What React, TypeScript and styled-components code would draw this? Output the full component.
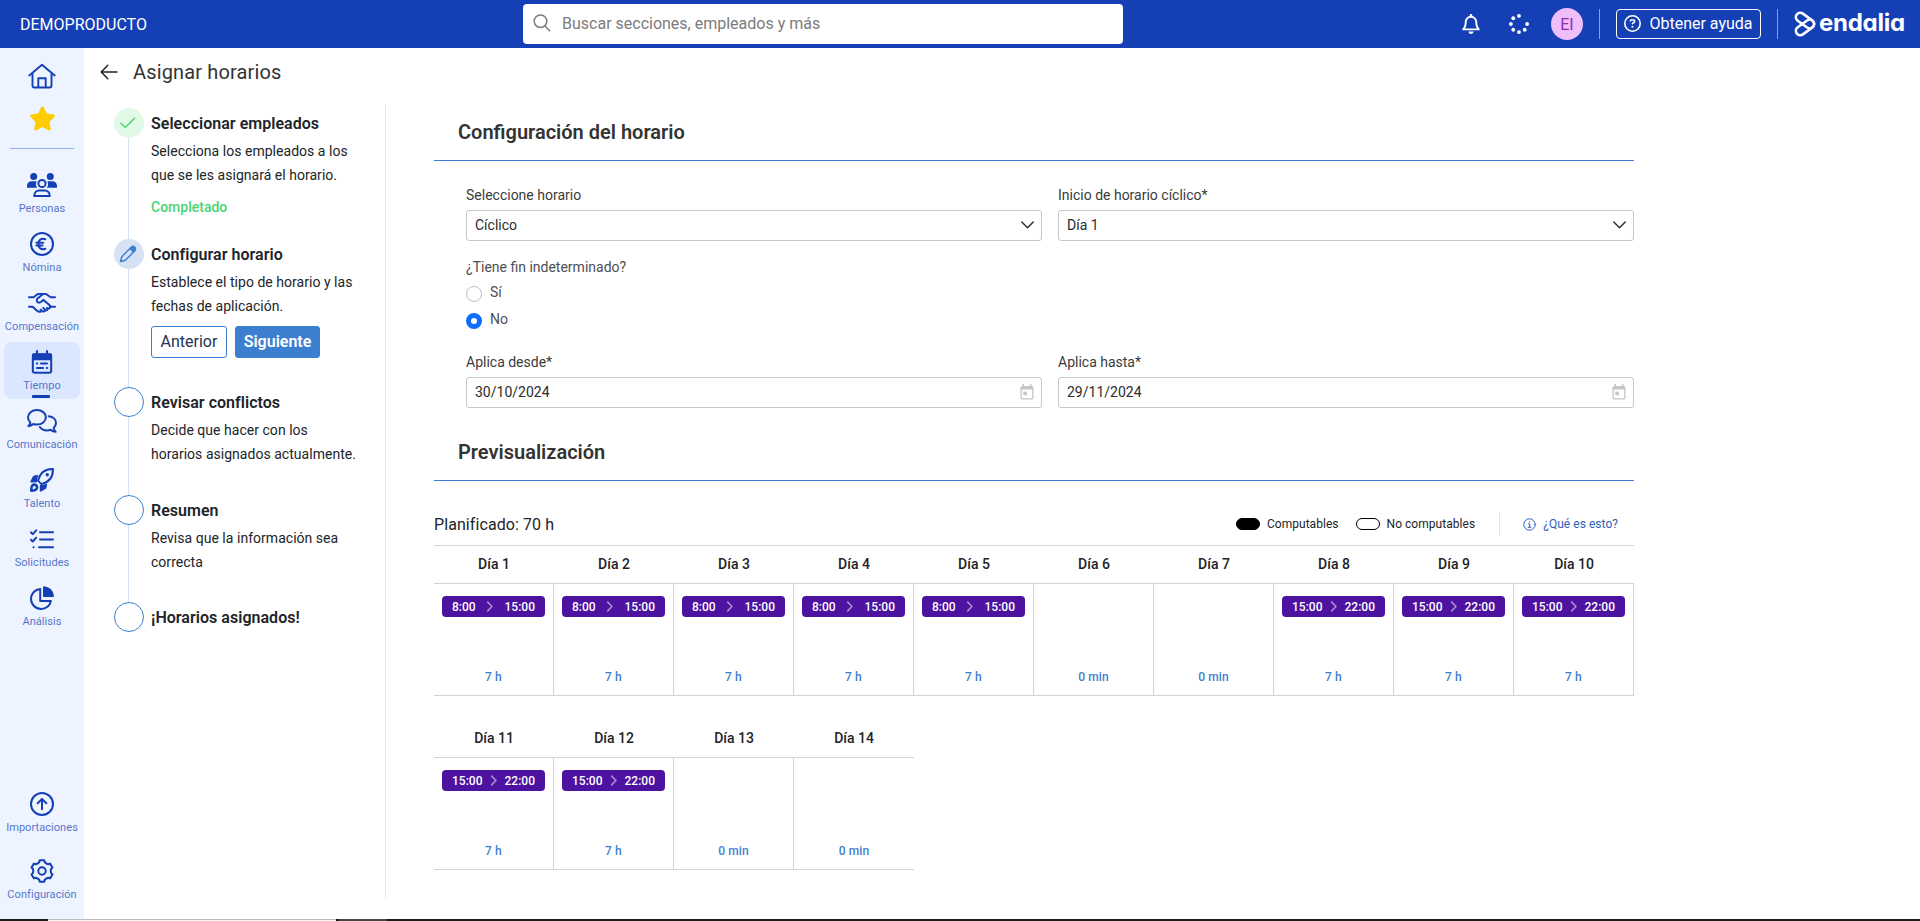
import React from "react";
import styled, { createGlobalStyle } from "styled-components";
import { FaRegBell, FaStar, FaRegCircleQuestion } from "react-icons/fa6";

const NAVY = "#143fb5";
const BLUE = "#3a7fd2";

const GlobalStyle = createGlobalStyle`
  *, *::before, *::after { box-sizing: border-box; }
  body {
    margin: 0;
    background: #fff;
    color: #212429;
    font-family: Roboto, "Liberation Sans", sans-serif;
    overflow: hidden;
  }
  button { font-family: inherit; }
  svg { display: block; flex: none; }
  p, h1, h2, h3 { margin: 0; }
`;

const Page = styled.div`
  display: flex;
  flex-direction: column;
  height: 921px;
`;

/* ---------- top bar ---------- */

const TopBar = styled.header`
  height: 48px;
  flex: none;
  display: grid;
  grid-template-columns: 523px 600px 1fr;
  align-items: center;
  background: #143fb5;
  color: #fff;
`;

const Company = styled.div`
  padding-left: 20px;
  font-size: 16px;
`;

const SearchBox = styled.div`
  height: 40px;
  display: flex;
  align-items: center;
  gap: 11px;
  padding: 0 10px 2px;
  border-radius: 4px;
  background: #fff;
  color: #7c7c7c;
  font-size: 16px;
`;

const Tools = styled.div`
  display: flex;
  align-items: center;
  justify-content: flex-end;
  padding-right: 16px;
`;

const ToolIcon = styled.div<{ $gap: number }>`
  display: flex;
  margin-right: ${(p) => p.$gap}px;
`;

const Avatar = styled.div`
  width: 32px;
  height: 32px;
  margin-right: 16px;
  border-radius: 50%;
  display: grid;
  place-items: center;
  background: #efbcfc;
  color: #8a2fa8;
  font-size: 16px;
`;

const Separator = styled.div`
  width: 1px;
  height: 30px;
  background: #89a2e0;
`;

const HelpButton = styled.button`
  width: 145px;
  height: 30px;
  margin: 0 16px;
  padding: 0 0 1px;
  display: flex;
  align-items: center;
  justify-content: center;
  gap: 8px;
  border: 1px solid #fff;
  border-radius: 4px;
  background: transparent;
  color: #fff;
  font-size: 16px;
`;

const Brand = styled.div`
  display: flex;
  align-items: center;
  width: 126px;
  padding-left: 16px;
  gap: 3px;
`;

const BrandName = styled.span`
  font-family: Inter, sans-serif;
  font-weight: 700;
  font-size: 24px;
  line-height: 28px;
  letter-spacing: -0.25px;
  font-feature-settings: "cv11";
  padding-bottom: 3px;
`;

/* ---------- side bar ---------- */

const Body = styled.div`
  flex: 1;
  min-height: 0;
  display: flex;
`;

const SideBar = styled.nav`
  width: 84px;
  flex: none;
  display: flex;
  flex-direction: column;
  align-items: center;
  background: #edf4ff;
  color: ${NAVY};
`;

const Shortcut = styled.div<{ $top: number }>`
  height: 26px;
  margin-top: ${(p) => p.$top}px;
  display: grid;
  place-items: center;
`;

const SideRule = styled.div`
  width: 64px;
  height: 1px;
  margin: 17px 0 16px;
  background: #8eb4f2;
`;

const NavItem = styled.div<{ $active?: boolean }>`
  width: 76px;
  height: 57px;
  margin-bottom: 2px;
  padding-top: 8px;
  display: flex;
  flex-direction: column;
  align-items: center;
  border-radius: 8px;
  background: ${(p) => (p.$active ? "#dbe7fe" : "transparent")};
`;

const NavIcon = styled.div`
  height: 24px;
  display: grid;
  place-items: center;
`;

const NavLabel = styled.span`
  margin-top: 5px;
  font-size: 11px;
  line-height: 14px;
  letter-spacing: 0.06px;
  color: #5876cb;
  white-space: nowrap;
`;

const ActiveBar = styled.div`
  width: 18px;
  height: 3px;
  margin: 2px 2px 0 0;
  border-radius: 1px;
  background: ${NAVY};
`;

const NavBottom = styled.div`
  margin-top: auto;
  display: flex;
  flex-direction: column;
  gap: 8px;
  padding-bottom: 9px;
`;

/* ---------- wizard steps ---------- */

const Content = styled.main`
  flex: 1;
  display: flex;
  flex-direction: column;
`;

const TitleRow = styled.div`
  height: 56px;
  flex: none;
  display: flex;
  align-items: center;
  gap: 15px;
  padding: 0 0 8px 16px;
`;

const PageTitle = styled.h1`
  font-size: 20px;
  font-weight: 400;
  letter-spacing: 0.14px;
  color: #333;
`;

const Columns = styled.div`
  flex: 1;
  display: flex;
`;

const Steps = styled.aside`
  width: 302px;
  height: 795px;
  padding: 4px 20px 0 30px;
  border-right: 1px solid #e7e8ec;
`;

const Step = styled.section<{ $height: number }>`
  height: ${(p) => p.$height}px;
  display: flex;
  gap: 7px;
`;

const StepTrack = styled.div`
  width: 30px;
  flex: none;
  display: flex;
  flex-direction: column;
`;

const StepDot = styled.div<{ $kind: "done" | "current" | "todo" }>`
  width: 30px;
  height: 30px;
  flex: none;
  display: grid;
  place-items: center;
  padding: 0 2px 1px 0;
  border-radius: 50%;
  border: ${(p) => (p.$kind === "todo" ? `1px solid ${BLUE}` : "0")};
  background: ${(p) => ({ done: "#e2f9e8", current: "#d6e1f4", todo: "#fff" })[p.$kind]};
`;

const StepLine = styled.div`
  flex: 1;
  width: 1px;
  margin-left: 14px;
  background: #d3dff3;
`;

const StepText = styled.div`
  white-space: nowrap;
`;

const StepTitle = styled.h2`
  font-size: 16px;
  font-weight: 600;
  line-height: 24px;
  padding-top: 4px;
  letter-spacing: 0.03px;
`;

const StepInfo = styled.p`
  margin-top: 4px;
  font-size: 14px;
  line-height: 23.6px;
  letter-spacing: 0.03px;
`;

const StepState = styled.p`
  margin-top: 9px;
  font-size: 14px;
  font-weight: 500;
  line-height: 22px;
  color: #4dd471;
`;

const StepActions = styled.div`
  display: flex;
  gap: 8px;
  margin-top: 8px;
`;

const StepButton = styled.button<{ $primary?: boolean }>`
  width: ${(p) => (p.$primary ? 85 : 76)}px;
  height: 32px;
  padding: 0 0 1px;
  border: 1px solid ${BLUE};
  border-radius: 3px;
  background: ${(p) => (p.$primary ? "#3c7ed0" : "#fff")};
  color: ${(p) => (p.$primary ? "#fff" : "#1f3354")};
  font-size: 16px;
  font-weight: ${(p) => (p.$primary ? 600 : 400)};
`;

/* ---------- form ---------- */

const Panel = styled.div`
  width: 1200px;
  margin-left: 48px;
`;

const SectionTitle = styled.h2`
  height: 57px;
  padding: 16px 24px 0;
  border-bottom: 1px solid ${BLUE};
  color: #333;
  font-size: 20px;
  font-weight: 600;
  line-height: 24px;
`;

const FieldGrid = styled.div`
  display: grid;
  grid-template-columns: 1fr 1fr;
  column-gap: 16px;
  padding-left: 32px;
`;

const Field = styled.label`
  display: flex;
  flex-direction: column;
  gap: 5px;
  font-size: 14px;
  line-height: 20px;
  color: #3b3b3b;
`;

const Control = styled.div`
  height: 31px;
  display: flex;
  align-items: center;
  justify-content: space-between;
  padding: 0 7px 1px 8px;
  border: 1px solid #c8c8c8;
  border-radius: 3px;
  color: #2b2b2b;
`;

const RadioGroup = styled.div`
  padding: 16px 0 0 32px;
  height: 111px;
  font-size: 14px;
  line-height: 20px;
  color: #4c4f54;
`;

const RadioRow = styled.div`
  height: 27px;
  display: flex;
  align-items: flex-start;
  gap: 8px;
  padding-top: 5px;
`;

const RadioDot = styled.span<{ $on?: boolean }>`
  width: 16px;
  height: 16px;
  margin-top: 4px;
  border-radius: 50%;
  border: ${(p) => (p.$on ? "5px solid #0d6efd" : "1px solid #bfbfbf")};
  background: #fff;
`;

/* ---------- preview ---------- */

const PreviewBar = styled.div`
  height: 64px;
  padding-top: 22px;
  display: flex;
  align-items: center;
  font-size: 16px;
  letter-spacing: 0.08px;
`;

const Legend = styled.div`
  margin-left: auto;
  padding-right: 16px;
  display: flex;
  align-items: center;
  font-size: 12px;
  letter-spacing: 0.04px;
`;

const Swatch = styled.span<{ $filled?: boolean }>`
  width: 24px;
  height: 12px;
  margin: 0 7px 0 17px;
  border: 1px solid #000;
  border-radius: 6px;
  background: ${(p) => (p.$filled ? "#000" : "#fff")};
`;

const LegendHelp = styled.div`
  height: 24px;
  margin-left: 24px;
  padding-left: 23px;
  display: flex;
  align-items: center;
  gap: 7px;
  border-left: 1px solid #e6e6e6;
  color: #2c62b8;
`;

const Week = styled.div<{ $first?: boolean }>`
  display: flex;
  width: fit-content;
  margin-top: ${(p) => (p.$first ? 0 : 23)}px;
  border-top: ${(p) => (p.$first ? "1px solid #d4d4d4" : "0")};
  border-bottom: 1px solid #d4d4d4;
`;

const Day = styled.div`
  width: 120px;
`;

const DayName = styled.div<{ $first?: boolean }>`
  height: ${(p) => (p.$first ? 37 : 38)}px;
  padding-bottom: 1px;
  display: grid;
  place-items: center;
  font-size: 14px;
  font-weight: 500;
`;

const DayCell = styled.div<{ $edge: boolean }>`
  height: 112px;
  padding: 12px 8px 10px;
  display: flex;
  flex-direction: column;
  align-items: center;
  justify-content: space-between;
  border-top: 1px solid #d4d4d4;
  border-right: ${(p) => (p.$edge ? "1px solid #d4d4d4" : "0")};
`;

const Shift = styled.div`
  width: 103px;
  height: 21px;
  padding: 0 10px;
  display: flex;
  align-items: center;
  justify-content: space-between;
  border-radius: 4px;
  background: #4d12a0;
  color: #fff;
  font-size: 12px;
  font-weight: 500;
`;

const Total = styled.span`
  margin-top: auto;
  font-size: 12px;
  font-weight: 500;
  line-height: 16px;
  letter-spacing: 0.1px;
  color: #3f7fcf;
`;

/* ---------- taskbar edge ---------- */

const Edge = styled.footer`
  height: 2px;
  flex: none;
  display: grid;
  grid-template-columns: 48px 288px 3px 48px 1fr;
  background: #1b1b1b;
`;

const EdgeField = styled.div`
  grid-column: 2;
  border-top: 1px solid #bdbdbd;
  background: #f3f3f3;
`;

const EdgeButton = styled.div`
  grid-column: 4;
  background: #484848;
`;

/* ---------- icons ---------- */

type DrawProps = { w: number; h: number; sw?: number; children: React.ReactNode };

const Draw = ({ w, h, sw = 2, children }: DrawProps) => (
  <svg
    width={w}
    height={h}
    viewBox={`0 0 ${w} ${h}`}
    fill="none"
    stroke="currentColor"
    strokeWidth={sw}
    strokeLinecap="round"
    strokeLinejoin="round"
  >
    {children}
  </svg>
);

const HomeIcon = () => (
  <Draw w={28} h={26} sw={1.9}>
    <path d="M1.300 12.500 14 1.800 26.700 12.500" />
    <path d="M4.500 11v11.500a2 2 0 0 0 2 2h15a2 2 0 0 0 2-2V11" />
    <path d="M10.300 24v-8.800h7.400V24" />
  </Draw>
);

const PeopleIcon = () => (
  <Draw w={30} h={24}>
    <g fill="currentColor" stroke="none">
      <circle cx="6.7" cy="3.5" r="3.5" />
      <circle cx="23.3" cy="3.5" r="3.5" />
      <path d="M0 14.8V13c0-2.8 2-4.8 4.8-4.8H8.6l1.1.4c-1.3 2.2-1 4.6.5 6.2zM30 14.800V13c0-2.800-2-4.800-4.800-4.800h-3.800l-1.100.4c1.300 2.200 1 4.600-.5 6.200z" />
    </g>
    <circle cx="15" cy="10.5" r="3.6" />
    <path d="M7.2 23c0-3.400 2.300-5.500 5-5.500h5.600c2.700 0 5 2.100 5 5.500z" />
  </Draw>
);

const EuroIcon = () => (
  <Draw w={24} h={24}>
    <circle cx="12" cy="12" r="11" />
    <path d="M15.300 7.200c-4.200-1.500-7 .9-7 4.800s2.800 6.300 7 4.800M6.400 10.700h6.800M6.400 13.500h6.200" />
  </Draw>
);

const HandshakeIcon = () => (
  <Draw w={28} h={20}>
    <path d="M1 4.200h4.600L8.800 1.700c1.600-1.100 4-1.100 5.600-.2M27 4.200h-4.300l-3.900-2.700c-1.500-.9-3.300-.8-4.700.2L9.600 5.600c-1.200 1-1 2.700 0 3.500 1 .7 2.200.6 3.200-.1l2.700-2.100 5.900 5.100c1.100 1 1 2.400.1 3.100-.8.6-1.900.4-2.500-.1" />
    <path d="M1 13.700h3.700l4 3.700c1.800 1.500 3.600 1.700 5.300.8 1.200.7 2.700.3 3.200-.9 1.200.3 2.300-.4 2.600-1.500M27 13.700h-4.800M14 18l-1.300-1.200M17 16.800l-1.800-1.900" />
  </Draw>
);

const CalendarIcon = () => (
  <Draw w={22} h={24}>
    <path d="M6 1v3M16 1v3" />
    <rect x="1.800" y="4.200" width="18.400" height="18.600" rx="2" />
    <path d="M2 4.500h18v4.700H2z" fill="currentColor" />
    <path d="M10 13.600h6M6 18h6M5.800 13.600h.4M15.800 18h.4" />
  </Draw>
);

const ChatIcon = () => (
  <Draw w={30} h={24}>
    <path d="M1.400 17.100c1-.9 1.700-2 2-3.400C1.900 12.200 1 10.300 1 8.300 1 4.300 4.900 1 9.900 1s9 3.300 9 7.300-4 7.300-9 7.300c-1.300 0-2.500-.2-3.600-.6-1.300 1.200-3 2-4.900 2.100z" />
    <path d="M21.800 7.200c4.200.5 7.200 3.300 7.200 6.900 0 2-.9 3.700-2.300 5 .3 1.400 1 2.600 2 3.700-2.100 0-3.800-.8-5.100-2-1 .4-2.200.6-3.500.6-3.100 0-5.700-1.300-7.200-3.300" />
  </Draw>
);

const RocketIcon = () => (
  <Draw w={24} h={24}>
    <path d="M8 12.600C10 5.500 14.500.8 22.900 1.100c.4 8.500-4.300 13-11.400 15z" />
    <circle cx="17.300" cy="6.700" r="1.700" fill="currentColor" stroke="none" />
    <g fill="currentColor" stroke="none">
      <path d="M8.400 6.900 5.300 7.200C4 7.400 3 8.200 2.400 9.300L.5 13.200c-.3.700.1 1.300.9 1.300l5.600-.3c0-2.700.4-4.900 1.400-7.300zM17.100 15.600l-.3 3.200c-.2 1.200-1 2.200-2.100 2.800l-3.600 2c-.7.300-1.300-.1-1.300-.9v-5.600c2.700 0 4.900-.5 7.300-1.500z" />
    </g>
    <path
      d="M1.400 22.700c-.2-2.700.1-4.400 1-5.300 1.100-1.100 2.900-1.100 3.900 0 1 1 1 2.800-.1 3.900-.8.9-2.500 1.300-4.800 1.400z"
      strokeWidth="2.600"
    />
  </Draw>
);

const TasksIcon = () => (
  <Draw w={24} h={20}>
    <path d="M1 3.400l1.800 1.700L6.200 1.300M1 10.800l1.800 1.700 3.400-3.800M10 3.300h13M10 10.600h13M9 18.200h14M3.400 18.200h.2" />
  </Draw>
);

const PieIcon = () => (
  <Draw w={24} h={24}>
    <path d="M10.200 3C4.800 3.500 1 7.900 1 12.800 1 18.500 5.500 23 11.200 23c4.700 0 8.900-3.200 9.700-8.100H10.200z" />
    <path d="M14 1.200c5 .3 8.600 4.200 9 8.800h-9z" fill="currentColor" />
  </Draw>
);

const UploadIcon = () => (
  <Draw w={24} h={24}>
    <circle cx="12" cy="12" r="11" />
    <path d="M12 17.200V7M7.700 11.200 12 6.900l4.300 4.300" />
  </Draw>
);

const GearIcon = () => {
  const teeth = [0, 1, 2, 3, 4, 5].flatMap((i) =>
    [
      [-30, 8.7],
      [-17, 9.3],
      [-12, 11],
      [12, 11],
      [17, 9.3],
    ].map(([offset, radius]) => {
      const angle = ((i * 60 + offset) * Math.PI) / 180;
      return `${(12 + radius * Math.sin(angle)).toFixed(2)},${(12 - radius * Math.cos(angle)).toFixed(2)}`;
    }),
  );
  return (
    <Draw w={24} h={24}>
      <polygon points={teeth.join(" ")} />
      <circle cx="12" cy="12" r="3.7" />
    </Draw>
  );
};

const SpinnerIcon = () => (
  <svg width="20" height="20" viewBox="0 0 20 20" fill="#fff">
    {[0, 90, 135, 180, 225, 270, 315].map((deg) => (
      <circle
        key={deg}
        cx={10 + 8.1 * Math.sin((deg * Math.PI) / 180)}
        cy={10 - 8.1 * Math.cos((deg * Math.PI) / 180)}
        r="1.9"
      />
    ))}
  </svg>
);

const BrandMark = () => (
  <Draw w={22} h={26} sw={2.6}>
    <rect x="-10.2" y="-4.4" width="20.4" height="8.8" rx="4.4" transform="translate(11 9.600) rotate(36)" />
    <rect x="-10.2" y="-4.4" width="20.4" height="8.8" rx="4.4" transform="translate(11 16.400) rotate(-36)" />
  </Draw>
);

const SearchIcon = () => (
  <Draw w={18} h={18} sw={1.5}>
    <circle cx="7.500" cy="7.200" r="6.300" />
    <path d="M12 12l4.700 4.700" />
  </Draw>
);

const BackIcon = () => (
  <Draw w={18} h={16} sw={1.5}>
    <path d="M17 8H1.200M7.800 1.300 1.200 8l6.600 6.700" />
  </Draw>
);

const CheckIcon = () => (
  <Draw w={16} h={12} sw={1.5}>
    <path d="M1 6.300 5.300 10.500 14.500 1.200" stroke="#4dd471" />
  </Draw>
);

const PencilIcon = () => (
  <Draw w={18} h={18} sw={1.4}>
    <g stroke={BLUE}>
      <path d="M1.500 16.500l1.300-4.800L12.200 2.200a2.200 2.200 0 0 1 3.200 0l.4.4a2.200 2.200 0 0 1 0 3.200L6.400 15.200z" />
      <path d="M11 3.500l2-1.800c1-.6 2-.4 2.700.5s.9 2 .1 3l-1.500 1.900z" fill={BLUE} />
    </g>
  </Draw>
);

const DownIcon = () => (
  <Draw w={13} h={8} sw={1.4}>
    <path d="M.8 1l5.700 5.800L12.200 1" />
  </Draw>
);

const DateIcon = () => (
  <svg width="14" height="16" viewBox="0 0 14 16" fill="#c6c6c6">
    <path d="M2.500 0h1.500v2h6V0h1.500v2H12a1.500 1.500 0 0 1 1.500 1.500V14a1.500 1.500 0 0 1-1.500 1.500H2A1.500 1.500 0 0 1 .5 14V3.500A1.500 1.500 0 0 1 2 2h.5zM1.800 5.500v8.700h10.400V5.500z" fillRule="evenodd" />
    <path d="M3.300 7.700h3.600v3.600H3.300z" />
  </svg>
);

const ToIcon = () => (
  <Draw w={8} h={11} sw={1.7}>
    <path d="M1.700 1.200l4.200 4.300-4.200 4.300" stroke="#a78bd0" />
  </Draw>
);

const InfoIcon = () => (
  <Draw w={13} h={13} sw={1}>
    <circle cx="6.5" cy="6.5" r="5.700" />
    <path d="M5.500 5.800h1.200v3.400M5.200 9.300h2.800M6.500 3.600v.3" />
  </Draw>
);

/* ---------- data ---------- */

const navItems = [
  { label: "Personas", icon: <PeopleIcon /> },
  { label: "Nómina", icon: <EuroIcon /> },
  { label: "Compensación", icon: <HandshakeIcon /> },
  { label: "Tiempo", icon: <CalendarIcon />, active: true },
  { label: "Comunicación", icon: <ChatIcon /> },
  { label: "Talento", icon: <RocketIcon /> },
  { label: "Solicitudes", icon: <TasksIcon /> },
  { label: "Análisis", icon: <PieIcon /> },
];

type DayPlan = { day: number; from?: string; to?: string };

const morning = (day: number): DayPlan => ({ day, from: "8:00", to: "15:00" });
const evening = (day: number): DayPlan => ({ day, from: "15:00", to: "22:00" });

const rows: DayPlan[][] = [
  [...[1, 2, 3, 4, 5].map(morning), { day: 6 }, { day: 7 }, ...[8, 9, 10].map(evening)],
  [evening(11), evening(12), { day: 13 }, { day: 14 }],
];

const FirstFields = styled(FieldGrid)`
  padding-top: 24px;
`;

const PreviewTitle = styled(SectionTitle)`
  margin-top: 16px;
`;

const SelectField = ({ label, value }: { label: string; value: string }) => (
  <Field>
    {label}
    <Control>
      {value}
      <DownIcon />
    </Control>
  </Field>
);

const DateField = ({ label, value }: { label: string; value: string }) => (
  <Field>
    {label}
    <Control>
      {value}
      <DateIcon />
    </Control>
  </Field>
);

export default function App() {
  return (
    <Page>
      <GlobalStyle />
      <TopBar>
        <Company>DEMOPRODUCTO</Company>
        <SearchBox>
          <SearchIcon />
          Buscar secciones, empleados y más
        </SearchBox>
        <Tools>
          <ToolIcon $gap={28}>
            <FaRegBell size={20} />
          </ToolIcon>
          <ToolIcon $gap={22}>
            <SpinnerIcon />
          </ToolIcon>
          <Avatar>EI</Avatar>
          <Separator />
          <HelpButton>
            <FaRegCircleQuestion size={17} />
            Obtener ayuda
          </HelpButton>
          <Separator />
          <Brand>
            <BrandMark />
            <BrandName>endalia</BrandName>
          </Brand>
        </Tools>
      </TopBar>

      <Body>
        <SideBar>
          <Shortcut $top={15}>
            <HomeIcon />
          </Shortcut>
          <Shortcut $top={16}>
            <FaStar size={27} color="#ffcc00" />
          </Shortcut>
          <SideRule />
          {navItems.map((item) => (
            <NavItem key={item.label} $active={item.active}>
              <NavIcon>{item.icon}</NavIcon>
              <NavLabel>{item.label}</NavLabel>
              {item.active && <ActiveBar />}
            </NavItem>
          ))}
          <NavBottom>
            <NavItem>
              <NavIcon>
                <UploadIcon />
              </NavIcon>
              <NavLabel>Importaciones</NavLabel>
            </NavItem>
            <NavItem>
              <NavIcon>
                <GearIcon />
              </NavIcon>
              <NavLabel>Configuración</NavLabel>
            </NavItem>
          </NavBottom>
        </SideBar>

        <Content>
          <TitleRow>
            <BackIcon />
            <PageTitle>Asignar horarios</PageTitle>
          </TitleRow>
          <Columns>
            <Steps>
              <Step $height={131}>
                <StepTrack>
                  <StepDot $kind="done">
                    <CheckIcon />
                  </StepDot>
                  <StepLine />
                </StepTrack>
                <StepText>
                  <StepTitle>Seleccionar empleados</StepTitle>
                  <StepInfo>
                    Selecciona los empleados a los
                    <br />
                    que se les asignará el horario.
                  </StepInfo>
                  <StepState>Completado</StepState>
                </StepText>
              </Step>
              <Step $height={148}>
                <StepTrack>
                  <StepDot $kind="current">
                    <PencilIcon />
                  </StepDot>
                  <StepLine />
                </StepTrack>
                <StepText>
                  <StepTitle>Configurar horario</StepTitle>
                  <StepInfo>
                    Establece el tipo de horario y las
                    <br />
                    fechas de aplicación.
                  </StepInfo>
                  <StepActions>
                    <StepButton>Anterior</StepButton>
                    <StepButton $primary>Siguiente</StepButton>
                  </StepActions>
                </StepText>
              </Step>
              <Step $height={108}>
                <StepTrack>
                  <StepDot $kind="todo" />
                  <StepLine />
                </StepTrack>
                <StepText>
                  <StepTitle>Revisar conflictos</StepTitle>
                  <StepInfo>
                    Decide que hacer con los
                    <br />
                    horarios asignados actualmente.
                  </StepInfo>
                </StepText>
              </Step>
              <Step $height={107}>
                <StepTrack>
                  <StepDot $kind="todo" />
                  <StepLine />
                </StepTrack>
                <StepText>
                  <StepTitle>Resumen</StepTitle>
                  <StepInfo>
                    Revisa que la información sea
                    <br />
                    correcta
                  </StepInfo>
                </StepText>
              </Step>
              <Step $height={30}>
                <StepTrack>
                  <StepDot $kind="todo" />
                </StepTrack>
                <StepText>
                  <StepTitle>¡Horarios asignados!</StepTitle>
                </StepText>
              </Step>
            </Steps>

            <Panel>
              <SectionTitle>Configuración del horario</SectionTitle>
              <FirstFields>
                <SelectField label="Seleccione horario" value="Cíclico" />
                <SelectField label="Inicio de horario cíclico*" value="Día 1" />
              </FirstFields>
              <RadioGroup>
                ¿Tiene fin indeterminado?
                <RadioRow>
                  <RadioDot />
                  Sí
                </RadioRow>
                <RadioRow>
                  <RadioDot $on />
                  No
                </RadioRow>
              </RadioGroup>
              <FieldGrid>
                <DateField label="Aplica desde*" value="30/10/2024" />
                <DateField label="Aplica hasta*" value="29/11/2024" />
              </FieldGrid>
              <PreviewTitle>Previsualización</PreviewTitle>
              <PreviewBar>
                Planificado: 70 h
                <Legend>
                  <Swatch $filled />
                  Computables
                  <Swatch />
                  No computables
                  <LegendHelp>
                    <InfoIcon />
                    ¿Qué es esto?
                  </LegendHelp>
                </Legend>
              </PreviewBar>
              {rows.map((row, r) => (
                <Week key={r} $first={r === 0}>
                  {row.map((plan, i) => (
                    <Day key={plan.day}>
                      <DayName $first={r === 0}>Día {plan.day}</DayName>
                      <DayCell $edge={r === 0 || i < row.length - 1}>
                        {plan.from && (
                          <Shift>
                            {plan.from}
                            <ToIcon />
                            {plan.to}
                          </Shift>
                        )}
                        <Total>{plan.from ? "7 h" : "0 min"}</Total>
                      </DayCell>
                    </Day>
                  ))}
                </Week>
              ))}
            </Panel>
          </Columns>
        </Content>
      </Body>

      <Edge>
        <EdgeField />
        <EdgeButton />
      </Edge>
    </Page>
  );
}
